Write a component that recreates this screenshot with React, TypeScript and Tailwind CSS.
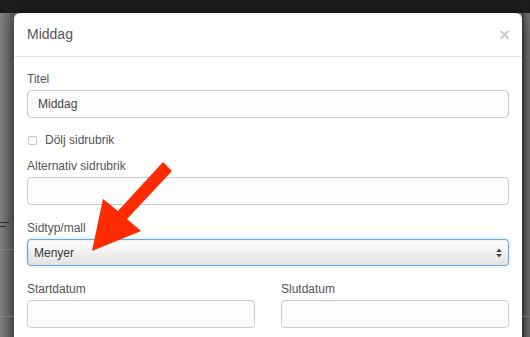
// ── Edit page modal (Bootstrap-ish) over dimmed backdrop ──

const font = { fontFamily: '"Liberation Sans", Arial, sans-serif' }

const Field = ({ label, className = '', children }: { label: string; className?: string; children: React.ReactNode }) => (
  <div className={className}>
    <div className="h-[17px] pt-[1px] text-[12px] leading-[17px] text-[#555]">{label}</div>
    <div className="mt-[3px]">{children}</div>
  </div>
)

const TextInput = ({ value = '' }: { value?: string }) => (
  <div className="flex h-[28px] items-center rounded-[4px] border border-[#cbcbcb] bg-[#fcfcfc] px-[10px] text-[12px] text-[#444]">
    {value}
  </div>
)

// annotation arrow drawn over the screenshot
const Arrow = () => (
  <svg className="pointer-events-none absolute left-0 top-0 z-20" width="530" height="337" viewBox="0 0 530 337">
    <polygon
      points="163,162 172,171 127,219 141,231 92,251 103,199 118,211"
      fill="#ff2b00"
    />
  </svg>
)

export default function App() {
  return (
    <div className="relative flex h-[337px] w-[530px] flex-col overflow-hidden bg-[#707070]" style={font}>
      {/* dimmed navbar */}
      <div className="h-[13px] shrink-0 bg-[#1b1b1b]" />

      <div className="flex min-h-0 flex-1">
        {/* dimmed page, left */}
        <div className="relative w-[14px] shrink-0 bg-gradient-to-r from-[#828282] to-[#5c5c5c]">
          <div className="absolute left-0 top-[209px] h-[1px] w-[9px] bg-[#2a2a2a]" />
          <div className="absolute left-0 top-[213px] h-[1px] w-[6px] bg-[#2a2a2a]" />
          <div className="absolute left-0 top-[236px] h-[1px] w-[14px] bg-[#888]" />
          <div className="absolute left-0 top-[303px] h-[1px] w-[14px] bg-[#888]" />
        </div>

        {/* modal */}
        <div className="relative z-10 h-[340px] w-[508px] shrink-0 rounded-t-[6px] bg-white shadow-[0_5px_15px_rgba(0,0,0,0.5)]">
          <div className="flex h-[44px] items-center justify-between border-b border-[#e5e5e5] px-[13px]">
            <span className="text-[14px] text-[#555]">Middag</span>
            <span className="mr-[-1px] text-[19px] font-bold leading-none text-[#cfcfcf]">×</span>
          </div>

          <div className="px-[13px] pt-[13px]">
            <Field label="Titel">
              <TextInput value="Middag" />
            </Field>

            <div className="mt-[13px] flex h-[18px] items-center gap-[8px] pl-[1px]">
              <div className="h-[9px] w-[9px] rounded-[2px] border border-[#c4c4c4] bg-white" />
              <span className="text-[12px] text-[#555]">Dölj sidrubrik</span>
            </div>

            <Field label="Alternativ sidrubrik" className="mt-[8px]">
              <TextInput />
            </Field>

            <Field label="Sidtyp/mall" className="mt-[14px]">
              <div className="flex h-[27px] items-center justify-between rounded-[4px] border border-[#66a9e8] bg-gradient-to-b from-white to-[#e2e2e2] px-[6px] text-[12px] text-[#3a3a3a] shadow-[inset_1px_1px_2px_rgba(0,0,0,0.08),0_0_3px_rgba(102,175,233,0.5)]">
                <span>Menyer</span>
                <svg width="6" height="10" viewBox="0 0 6 10">
                  <polygon points="3,0.5 5.8,4 0.2,4" fill="#444" />
                  <polygon points="0.2,6 5.8,6 3,9.5" fill="#444" />
                </svg>
              </div>
            </Field>

            <div className="mt-[14px] grid grid-cols-2 gap-[26px]">
              <Field label="Startdatum">
                <TextInput />
              </Field>
              <Field label="Slutdatum">
                <TextInput />
              </Field>
            </div>
          </div>
        </div>

        {/* dimmed page, right */}
        <div className="relative flex-1 bg-gradient-to-r from-[#3e3e3e] via-[#666] to-[#6e6e6e]">
          <div className="absolute left-0 right-0 top-[303px] h-[1px] bg-[#7c7c7c]" />
        </div>
      </div>

      <Arrow />
    </div>
  )
}
